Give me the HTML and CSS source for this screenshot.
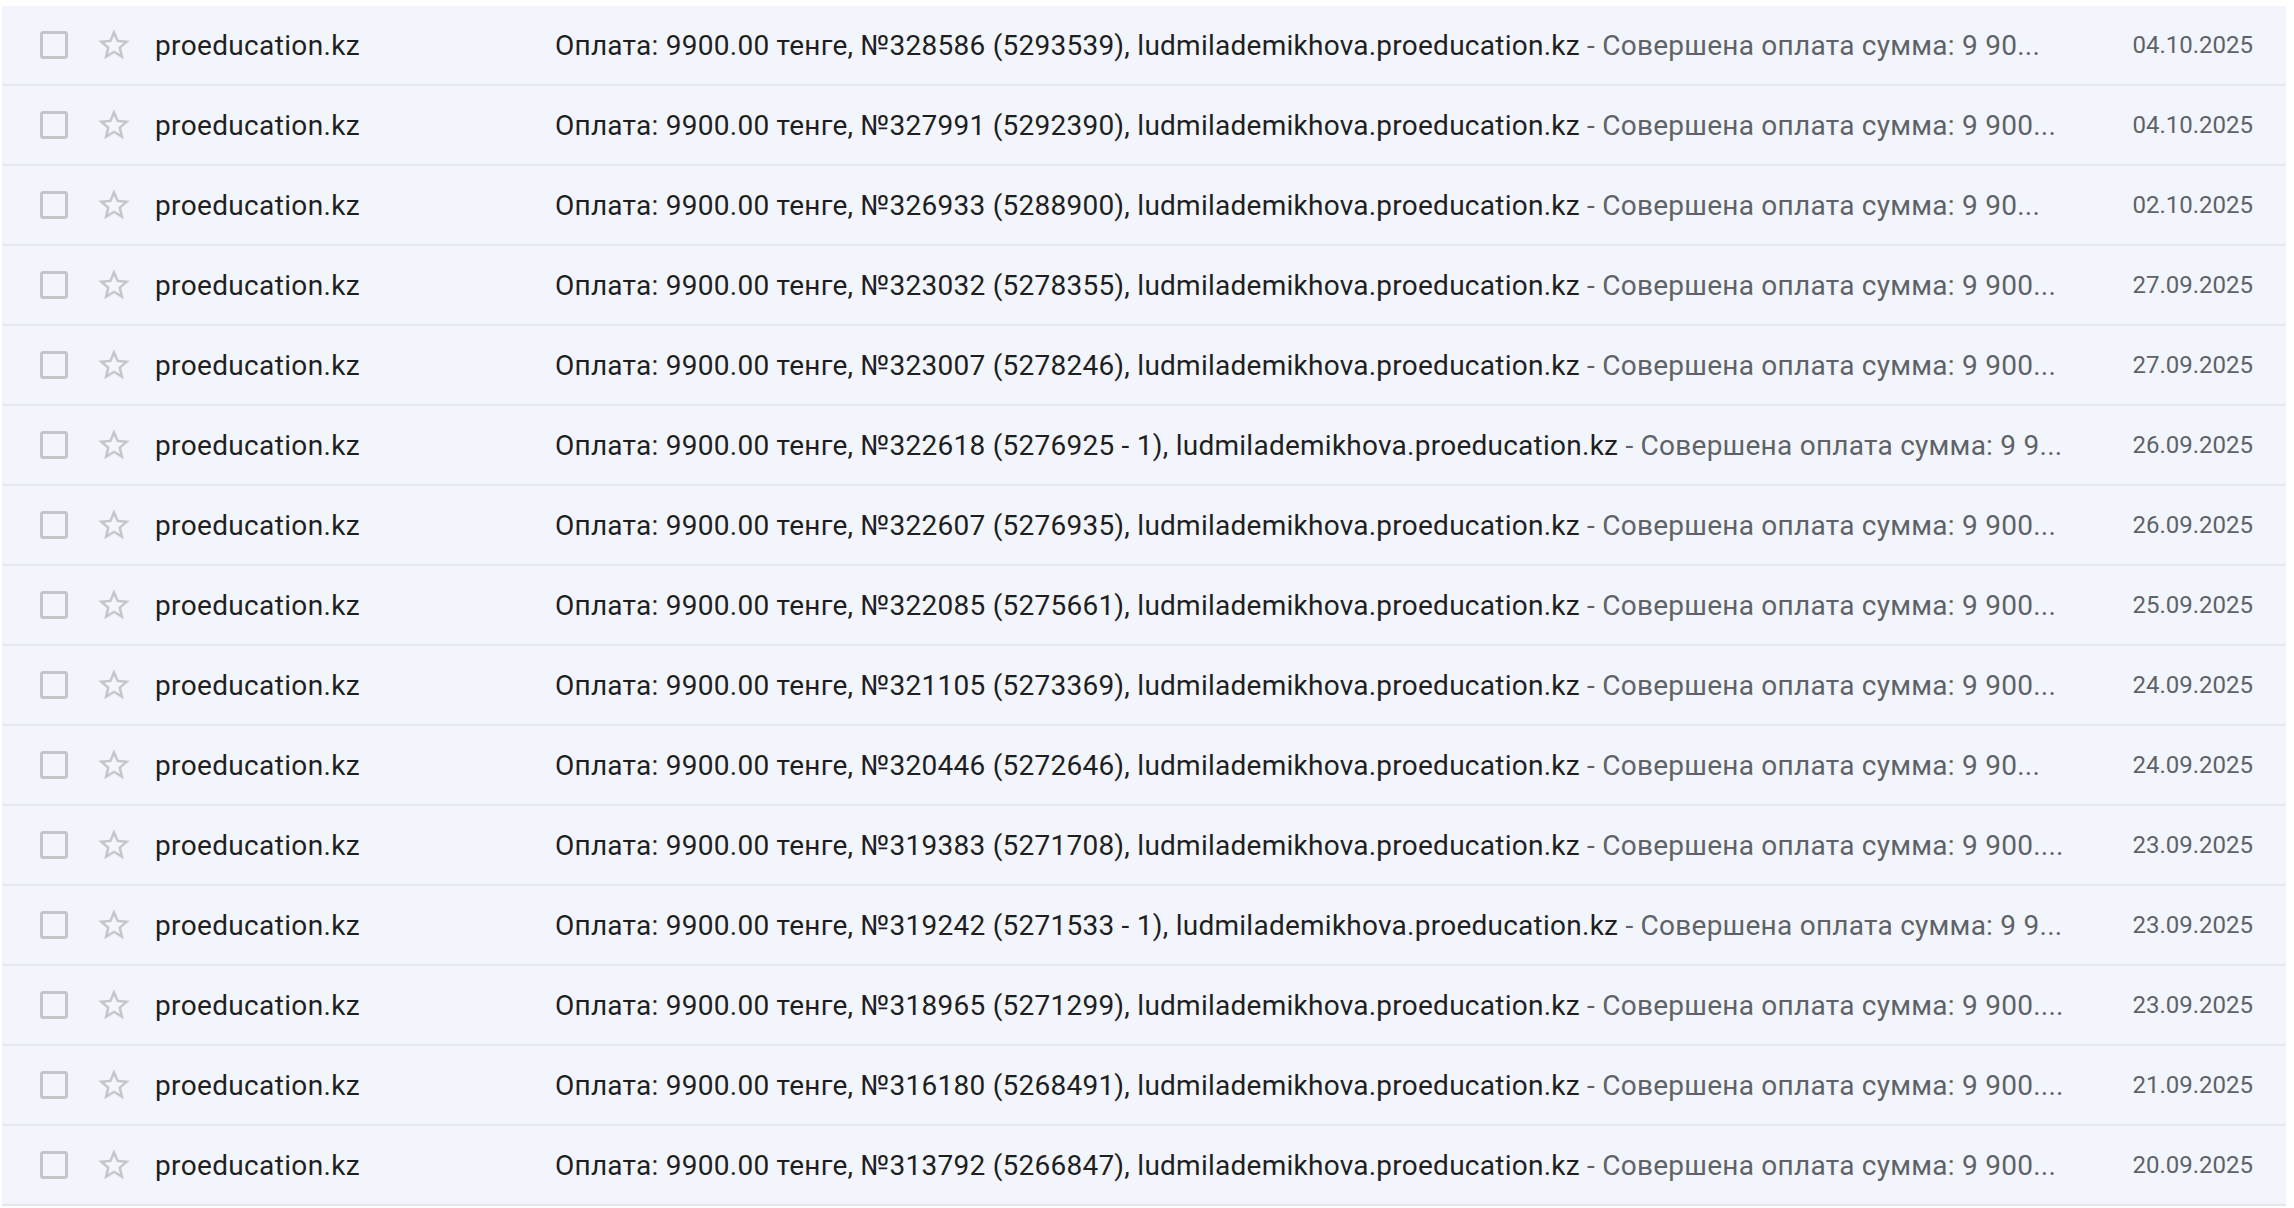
FILE: index.html
```html
<!DOCTYPE html>
<html lang="ru">
<head>
  <meta charset="UTF-8" />
  <title>Входящие</title>
  <meta name="viewport" content="width=device-width, initial-scale=1" />
  <link rel="stylesheet" href="styles.css">
</head>
<body>

  <div class="lista">

    <div class="fila">
      <span class="casilla"></span>
      <svg class="estrella" viewBox="0 0 24 24"><path d="M22 9.24l-7.19-.62L12 2 9.19 8.63 2 9.24l5.46 4.73L5.82 21 12 17.27 18.18 21l-1.63-7.03L22 9.24zM12 15.4l-3.76 2.27 1-4.28-3.32-2.88 4.38-.38L12 6.1l1.71 4.04 4.38.38-3.32 2.88 1 4.28L12 15.4z"/></svg>
      <span class="remitente">proeducation.kz</span>
      <span class="asunto">Оплата: 9900.00 тенге, №328586 (5293539), ludmilademikhova.proeducation.kz<span class="fragmento"> - Совершена оплата сумма: 9 90...</span></span>
      <span class="fecha">04.10.2025</span>
    </div>

    <div class="fila">
      <span class="casilla"></span>
      <svg class="estrella" viewBox="0 0 24 24"><path d="M22 9.24l-7.19-.62L12 2 9.19 8.63 2 9.24l5.46 4.73L5.82 21 12 17.27 18.18 21l-1.63-7.03L22 9.24zM12 15.4l-3.76 2.27 1-4.28-3.32-2.88 4.38-.38L12 6.1l1.71 4.04 4.38.38-3.32 2.88 1 4.28L12 15.4z"/></svg>
      <span class="remitente">proeducation.kz</span>
      <span class="asunto">Оплата: 9900.00 тенге, №327991 (5292390), ludmilademikhova.proeducation.kz<span class="fragmento"> - Совершена оплата сумма: 9 900...</span></span>
      <span class="fecha">04.10.2025</span>
    </div>

    <div class="fila">
      <span class="casilla"></span>
      <svg class="estrella" viewBox="0 0 24 24"><path d="M22 9.24l-7.19-.62L12 2 9.19 8.63 2 9.24l5.46 4.73L5.82 21 12 17.27 18.18 21l-1.63-7.03L22 9.24zM12 15.4l-3.76 2.27 1-4.28-3.32-2.88 4.38-.38L12 6.1l1.71 4.04 4.38.38-3.32 2.88 1 4.28L12 15.4z"/></svg>
      <span class="remitente">proeducation.kz</span>
      <span class="asunto">Оплата: 9900.00 тенге, №326933 (5288900), ludmilademikhova.proeducation.kz<span class="fragmento"> - Совершена оплата сумма: 9 90...</span></span>
      <span class="fecha">02.10.2025</span>
    </div>

    <div class="fila">
      <span class="casilla"></span>
      <svg class="estrella" viewBox="0 0 24 24"><path d="M22 9.24l-7.19-.62L12 2 9.19 8.63 2 9.24l5.46 4.73L5.82 21 12 17.27 18.18 21l-1.63-7.03L22 9.24zM12 15.4l-3.76 2.27 1-4.28-3.32-2.88 4.38-.38L12 6.1l1.71 4.04 4.38.38-3.32 2.88 1 4.28L12 15.4z"/></svg>
      <span class="remitente">proeducation.kz</span>
      <span class="asunto">Оплата: 9900.00 тенге, №323032 (5278355), ludmilademikhova.proeducation.kz<span class="fragmento"> - Совершена оплата сумма: 9 900...</span></span>
      <span class="fecha">27.09.2025</span>
    </div>

    <div class="fila">
      <span class="casilla"></span>
      <svg class="estrella" viewBox="0 0 24 24"><path d="M22 9.24l-7.19-.62L12 2 9.19 8.63 2 9.24l5.46 4.73L5.82 21 12 17.27 18.18 21l-1.63-7.03L22 9.24zM12 15.4l-3.76 2.27 1-4.28-3.32-2.88 4.38-.38L12 6.1l1.71 4.04 4.38.38-3.32 2.88 1 4.28L12 15.4z"/></svg>
      <span class="remitente">proeducation.kz</span>
      <span class="asunto">Оплата: 9900.00 тенге, №323007 (5278246), ludmilademikhova.proeducation.kz<span class="fragmento"> - Совершена оплата сумма: 9 900...</span></span>
      <span class="fecha">27.09.2025</span>
    </div>

    <div class="fila">
      <span class="casilla"></span>
      <svg class="estrella" viewBox="0 0 24 24"><path d="M22 9.24l-7.19-.62L12 2 9.19 8.63 2 9.24l5.46 4.73L5.82 21 12 17.27 18.18 21l-1.63-7.03L22 9.24zM12 15.4l-3.76 2.27 1-4.28-3.32-2.88 4.38-.38L12 6.1l1.71 4.04 4.38.38-3.32 2.88 1 4.28L12 15.4z"/></svg>
      <span class="remitente">proeducation.kz</span>
      <span class="asunto">Оплата: 9900.00 тенге, №322618 (5276925 - 1), ludmilademikhova.proeducation.kz<span class="fragmento"> - Совершена оплата сумма: 9 9...</span></span>
      <span class="fecha">26.09.2025</span>
    </div>

    <div class="fila">
      <span class="casilla"></span>
      <svg class="estrella" viewBox="0 0 24 24"><path d="M22 9.24l-7.19-.62L12 2 9.19 8.63 2 9.24l5.46 4.73L5.82 21 12 17.27 18.18 21l-1.63-7.03L22 9.24zM12 15.4l-3.76 2.27 1-4.28-3.32-2.88 4.38-.38L12 6.1l1.71 4.04 4.38.38-3.32 2.88 1 4.28L12 15.4z"/></svg>
      <span class="remitente">proeducation.kz</span>
      <span class="asunto">Оплата: 9900.00 тенге, №322607 (5276935), ludmilademikhova.proeducation.kz<span class="fragmento"> - Совершена оплата сумма: 9 900...</span></span>
      <span class="fecha">26.09.2025</span>
    </div>

    <div class="fila">
      <span class="casilla"></span>
      <svg class="estrella" viewBox="0 0 24 24"><path d="M22 9.24l-7.19-.62L12 2 9.19 8.63 2 9.24l5.46 4.73L5.82 21 12 17.27 18.18 21l-1.63-7.03L22 9.24zM12 15.4l-3.76 2.27 1-4.28-3.32-2.88 4.38-.38L12 6.1l1.71 4.04 4.38.38-3.32 2.88 1 4.28L12 15.4z"/></svg>
      <span class="remitente">proeducation.kz</span>
      <span class="asunto">Оплата: 9900.00 тенге, №322085 (5275661), ludmilademikhova.proeducation.kz<span class="fragmento"> - Совершена оплата сумма: 9 900...</span></span>
      <span class="fecha">25.09.2025</span>
    </div>

    <div class="fila">
      <span class="casilla"></span>
      <svg class="estrella" viewBox="0 0 24 24"><path d="M22 9.24l-7.19-.62L12 2 9.19 8.63 2 9.24l5.46 4.73L5.82 21 12 17.27 18.18 21l-1.63-7.03L22 9.24zM12 15.4l-3.76 2.27 1-4.28-3.32-2.88 4.38-.38L12 6.1l1.71 4.04 4.38.38-3.32 2.88 1 4.28L12 15.4z"/></svg>
      <span class="remitente">proeducation.kz</span>
      <span class="asunto">Оплата: 9900.00 тенге, №321105 (5273369), ludmilademikhova.proeducation.kz<span class="fragmento"> - Совершена оплата сумма: 9 900...</span></span>
      <span class="fecha">24.09.2025</span>
    </div>

    <div class="fila">
      <span class="casilla"></span>
      <svg class="estrella" viewBox="0 0 24 24"><path d="M22 9.24l-7.19-.62L12 2 9.19 8.63 2 9.24l5.46 4.73L5.82 21 12 17.27 18.18 21l-1.63-7.03L22 9.24zM12 15.4l-3.76 2.27 1-4.28-3.32-2.88 4.38-.38L12 6.1l1.71 4.04 4.38.38-3.32 2.88 1 4.28L12 15.4z"/></svg>
      <span class="remitente">proeducation.kz</span>
      <span class="asunto">Оплата: 9900.00 тенге, №320446 (5272646), ludmilademikhova.proeducation.kz<span class="fragmento"> - Совершена оплата сумма: 9 90...</span></span>
      <span class="fecha">24.09.2025</span>
    </div>

    <div class="fila">
      <span class="casilla"></span>
      <svg class="estrella" viewBox="0 0 24 24"><path d="M22 9.24l-7.19-.62L12 2 9.19 8.63 2 9.24l5.46 4.73L5.82 21 12 17.27 18.18 21l-1.63-7.03L22 9.24zM12 15.4l-3.76 2.27 1-4.28-3.32-2.88 4.38-.38L12 6.1l1.71 4.04 4.38.38-3.32 2.88 1 4.28L12 15.4z"/></svg>
      <span class="remitente">proeducation.kz</span>
      <span class="asunto">Оплата: 9900.00 тенге, №319383 (5271708), ludmilademikhova.proeducation.kz<span class="fragmento"> - Совершена оплата сумма: 9 900....</span></span>
      <span class="fecha">23.09.2025</span>
    </div>

    <div class="fila">
      <span class="casilla"></span>
      <svg class="estrella" viewBox="0 0 24 24"><path d="M22 9.24l-7.19-.62L12 2 9.19 8.63 2 9.24l5.46 4.73L5.82 21 12 17.27 18.18 21l-1.63-7.03L22 9.24zM12 15.4l-3.76 2.27 1-4.28-3.32-2.88 4.38-.38L12 6.1l1.71 4.04 4.38.38-3.32 2.88 1 4.28L12 15.4z"/></svg>
      <span class="remitente">proeducation.kz</span>
      <span class="asunto">Оплата: 9900.00 тенге, №319242 (5271533 - 1), ludmilademikhova.proeducation.kz<span class="fragmento"> - Совершена оплата сумма: 9 9...</span></span>
      <span class="fecha">23.09.2025</span>
    </div>

    <div class="fila">
      <span class="casilla"></span>
      <svg class="estrella" viewBox="0 0 24 24"><path d="M22 9.24l-7.19-.62L12 2 9.19 8.63 2 9.24l5.46 4.73L5.82 21 12 17.27 18.18 21l-1.63-7.03L22 9.24zM12 15.4l-3.76 2.27 1-4.28-3.32-2.88 4.38-.38L12 6.1l1.71 4.04 4.38.38-3.32 2.88 1 4.28L12 15.4z"/></svg>
      <span class="remitente">proeducation.kz</span>
      <span class="asunto">Оплата: 9900.00 тенге, №318965 (5271299), ludmilademikhova.proeducation.kz<span class="fragmento"> - Совершена оплата сумма: 9 900....</span></span>
      <span class="fecha">23.09.2025</span>
    </div>

    <div class="fila">
      <span class="casilla"></span>
      <svg class="estrella" viewBox="0 0 24 24"><path d="M22 9.24l-7.19-.62L12 2 9.19 8.63 2 9.24l5.46 4.73L5.82 21 12 17.27 18.18 21l-1.63-7.03L22 9.24zM12 15.4l-3.76 2.27 1-4.28-3.32-2.88 4.38-.38L12 6.1l1.71 4.04 4.38.38-3.32 2.88 1 4.28L12 15.4z"/></svg>
      <span class="remitente">proeducation.kz</span>
      <span class="asunto">Оплата: 9900.00 тенге, №316180 (5268491), ludmilademikhova.proeducation.kz<span class="fragmento"> - Совершена оплата сумма: 9 900....</span></span>
      <span class="fecha">21.09.2025</span>
    </div>

    <div class="fila">
      <span class="casilla"></span>
      <svg class="estrella" viewBox="0 0 24 24"><path d="M22 9.24l-7.19-.62L12 2 9.19 8.63 2 9.24l5.46 4.73L5.82 21 12 17.27 18.18 21l-1.63-7.03L22 9.24zM12 15.4l-3.76 2.27 1-4.28-3.32-2.88 4.38-.38L12 6.1l1.71 4.04 4.38.38-3.32 2.88 1 4.28L12 15.4z"/></svg>
      <span class="remitente">proeducation.kz</span>
      <span class="asunto">Оплата: 9900.00 тенге, №313792 (5266847), ludmilademikhova.proeducation.kz<span class="fragmento"> - Совершена оплата сумма: 9 900...</span></span>
      <span class="fecha">20.09.2025</span>
    </div>

  </div>

</body>
</html>
```

FILE: styles.css
```css
body {
  margin: 0;
  padding: 6px 8px 0 2px;
  background: #fff;
  font-family: Roboto, "Noto Sans", Arial, sans-serif;
  color: #1f1f1f;
}
.lista {
  display: flex;
  flex-direction: column;
}
.fila {
  display: flex;
  align-items: center;
  height: 78px;
  border-bottom: 2px solid #e4e8ef;
  background: #f2f6fc;
  white-space: nowrap;
}
.casilla {
  flex: none;
  width: 22px;
  height: 22px;
  margin-left: 38px;
  border: 3px solid #c4c7c9;
  border-radius: 3px;
}
.estrella {
  flex: none;
  width: 38px;
  height: 38px;
  margin-left: 27px;
  fill: #c4c7c9;
}
.remitente {
  flex: none;
  width: 400px;
  margin-left: 22px;
  font-size: 28px;
  letter-spacing: 0.35px;
  color: #1f1f1f;
}
.asunto {
  flex: 1;
  min-width: 0;
  overflow: hidden;
  text-overflow: ellipsis;
  font-size: 28px;
  letter-spacing: 0.25px;
  color: #1f1f1f;
}
.fragmento {
  color: #5f6368;
}
.fecha {
  flex: none;
  width: 160px;
  padding-right: 33px;
  text-align: right;
  font-size: 24px;
  color: #5f6368;
}
```
